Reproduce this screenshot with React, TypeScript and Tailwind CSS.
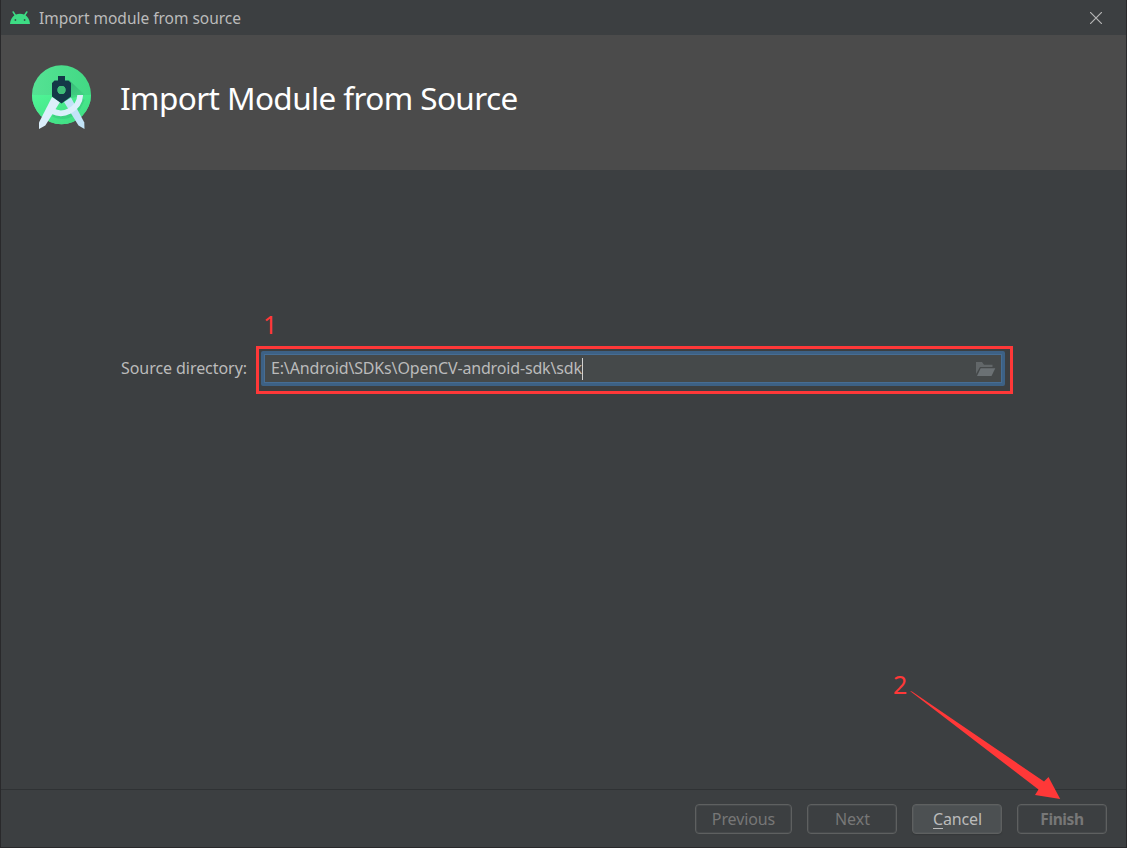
import React from 'react';

function AndroidHead() {
  return (
    <svg width="20" height="14" viewBox="0 0 20 14" className="shrink-0">
      <path d="M5.500 4.500 3.200 1M14.500 4.500 16.800 1" stroke="#3ddc84" strokeWidth="1.500" strokeLinecap="round" />
      <path d="M0 13C.5 6.800 4.300 2.700 10 2.700S19.500 6.800 20 13Z" fill="#3ddc84" />
      <circle cx="5.400" cy="9" r=".9" fill="#36534a" />
      <circle cx="14.600" cy="9" r=".9" fill="#36534a" />
    </svg>
  );
}

function StudioLogo() {
  return (
    <svg width="60" height="66" viewBox="0 0 60 66" className="shrink-0">
      <defs>
        <linearGradient id="upper" x1="0" y1="0" x2="1" y2="0">
          <stop offset="0" stopColor="#55e294" />
          <stop offset="1" stopColor="#42d984" />
        </linearGradient>
        <linearGradient id="lower" x1="0" y1="0" x2="1" y2="1">
          <stop offset="0" stopColor="#4ff596" />
          <stop offset="1" stopColor="#3ed980" />
        </linearGradient>
        <linearGradient id="shade" x1="0" y1="0" x2="1" y2="1">
          <stop offset="0" stopColor="#249064" stopOpacity=".65" />
          <stop offset="1" stopColor="#35b773" stopOpacity=".1" />
        </linearGradient>
        <clipPath id="disc"><circle cx="29.500" cy="29.800" r="29.500" /></clipPath>
      </defs>
      <circle cx="29.500" cy="29.800" r="29.500" fill="url(#upper)" />
      <g clipPath="url(#disc)">
        <path d="M0 30H60V60H0Z" fill="url(#lower)" />
        <path d="M37 15 53 30 40 33 30 37Z" fill="url(#shade)" />
        <path d="M21 50Q36 56 46 44L51 34" fill="none" stroke="#249064" strokeOpacity=".2" strokeWidth="4" />
      </g>
      <path d="m32 37 7-4.500L52.300 57.500 52.500 64 46.500 60.500Z" fill="#c2e3f7" />
      <path d="M20 32 28 37 13.300 60.500 7 64 7 57.500Z" fill="#dceffb" />
      <path d="M20.500 46.200Q29 50.500 37.500 46 47.800 40.500 48.200 30" fill="none" stroke="#dceffb" strokeWidth="5.800" />
      <path fillRule="evenodd" d="M26 11H33V15.500H36.500L39 18V31.500L29.500 38.500 20 31.500V18L22.500 15.500H26ZM29.500 21A4 4 0 1 0 29.500 29 4 4 0 0 0 29.500 21Z" fill="#143848" />
      <circle cx="29.500" cy="25" r="4" fill="#3fbd78" />
    </svg>
  );
}

function FolderIcon() {
  return (
    <svg width="20" height="15" viewBox="0 0 20 15" className="shrink-0">
      <path d="M0 0H6L8 2.700H16.500V5H4L0 12Z" fill="#626769" />
      <path d="M4.700 6.200H19.300L15.500 14H1Z" fill="#6b7174" />
    </svg>
  );
}

export default function App() {
  return (
    <main className="relative flex h-[848px] w-[1127px] flex-col overflow-hidden border-r border-b border-l border-[#29292b] bg-[#3c3f41] font-['Noto_Sans',sans-serif] text-base text-[#bbbbbb]">
      <header className="flex h-[35px] shrink-0 items-center pl-[9px]">
        <AndroidHead />
        <span className="ml-[9px] text-[15.500px] leading-5 tracking-[-0.02px] whitespace-nowrap">Import module from source</span>
        <button aria-label="Close" className="mr-6 ml-auto">
          <svg width="12" height="12" viewBox="0 0 12 12"><path d="m0 0 12 12M12 0 0 12" stroke="#b5b5b5" strokeWidth="1.200" /></svg>
        </button>
      </header>

      <section className="flex h-[135px] shrink-0 items-start bg-[#4b4b4b] pt-[30px] pl-[31px]">
        <StudioLogo />
        <h1 className="ml-[28px] pt-[11px] text-[31.500px] leading-[44px] tracking-[-0.6px] whitespace-nowrap text-white">Import Module from Source</h1>
      </section>

      <section className="h-[619px] shrink-0 pt-[176px]">
        <div className="flex h-12 items-center">
          <label htmlFor="directory" className="ml-[120px] w-[135px] pb-[4px] leading-6 tracking-[-0.06px] whitespace-nowrap">Source directory:</label>
          <div className="h-12 w-[757px] border-[3px] border-[#ff3838] p-[2px]">
            <div id="directory" className="flex h-[35px] w-[744px] items-center rounded-[2px] border-[3px] border-[#3d6185] bg-[#45494a] pr-[6px] pl-[7px] shadow-[inset_0_0_0_1px_#466d94]">
              <span className="pb-[2px] leading-6 tracking-[-0.16px] whitespace-nowrap">E:\Android\SDKs\OpenCV-android-sdk\sdk</span>
              <span className="h-[22px] w-px bg-[#d0d0d0]" />
              <span className="mt-[2px] ml-auto"><FolderIcon /></span>
            </div>
          </div>
        </div>
      </section>

      <footer className="flex h-[58px] shrink-0 items-start justify-end gap-[15px] border-t border-[#2f3234] pt-[14px] pr-[19px] text-[#777777]">
        <button className="h-[30px] w-[97px] rounded-[4px] border border-[#5e6060] tracking-[-0.1px] shadow-[inset_0_0_0_1px_#46494b]">Previous</button>
        <button className="h-[30px] w-[90px] rounded-[4px] border border-[#5e6060] pl-px shadow-[inset_0_0_0_1px_#46494b]">Next</button>
        <button className="h-[30px] w-[90px] rounded-[4px] border border-[#5e6060] bg-[#4c5052] pl-px tracking-[-0.15px] text-[#bbbbbb] shadow-[inset_0_0_0_1px_#525658,0_1px_1px_#35383a]"><span className="underline underline-offset-[3px]">C</span>ancel</button>
        <button className="h-[30px] w-[90px] rounded-[4px] border border-[#5e6060] pt-px text-[15.500px] font-bold tracking-[-0.400px] shadow-[inset_0_0_0_1px_#46494b]">Finish</button>
      </footer>

      <span className="absolute top-[309px] left-[262px] text-[25px] leading-[30px] text-[#ff3838]">1</span>
      <span className="absolute top-[669px] left-[892px] text-[25px] leading-[30px] text-[#ff3838]">2</span>
      <svg className="pointer-events-none absolute top-[690px] left-[908px]" width="153" height="110" viewBox="0 0 153 110">
        <path d="M1 1 3 1.500 135 91.500 139.500 87 151.200 109 126 105 129.500 99.500Z" fill="#ff3838" />
      </svg>
    </main>
  );
}
